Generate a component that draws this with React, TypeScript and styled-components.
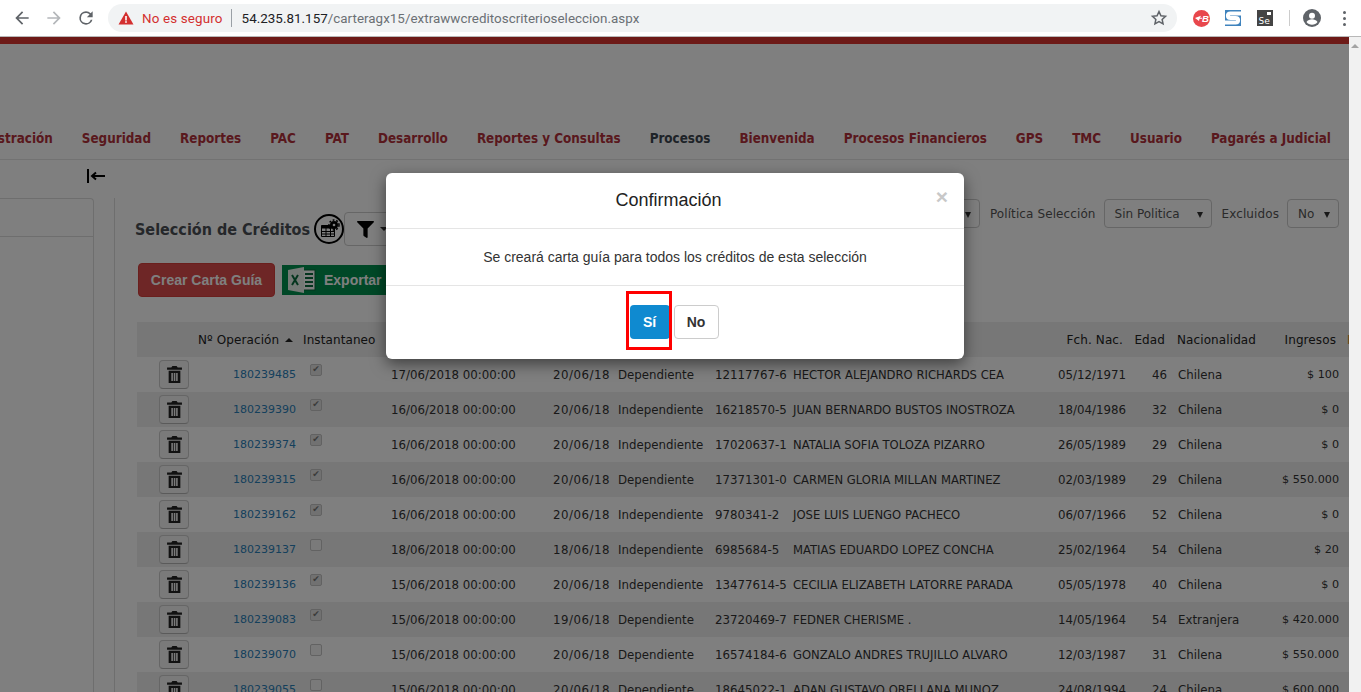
import { createGlobalStyle } from "styled-components";
import styled from "styled-components";
import { FaFilter } from "react-icons/fa";

interface CreditRow {
  id: string;
  instant: boolean;
  created: string;
  date: string;
  kind: string;
  rut: string;
  name: string;
  birth: string;
  age: string;
  nationality: string;
  income: string;
}

const row = (
  id: string,
  instant: boolean,
  created: string,
  date: string,
  kind: string,
  rut: string,
  name: string,
  birth: string,
  age: string,
  nationality: string,
  income: string
): CreditRow => ({ id, instant, created, date, kind, rut, name, birth, age, nationality, income });

const ROWS: CreditRow[] = [
  row("180239485", true, "17/06/2018 00:00:00", "20/06/18", "Dependiente", "12117767-6", "HECTOR ALEJANDRO RICHARDS CEA", "05/12/1971", "46", "Chilena", "$ 100"),
  row("180239390", true, "16/06/2018 00:00:00", "20/06/18", "Independiente", "16218570-5", "JUAN BERNARDO BUSTOS INOSTROZA", "18/04/1986", "32", "Chilena", "$ 0"),
  row("180239374", true, "16/06/2018 00:00:00", "20/06/18", "Independiente", "17020637-1", "NATALIA SOFIA TOLOZA PIZARRO", "26/05/1989", "29", "Chilena", "$ 0"),
  row("180239315", true, "16/06/2018 00:00:00", "20/06/18", "Dependiente", "17371301-0", "CARMEN GLORIA MILLAN MARTINEZ", "02/03/1989", "29", "Chilena", "$ 550.000"),
  row("180239162", true, "16/06/2018 00:00:00", "20/06/18", "Independiente", "9780341-2", "JOSE LUIS LUENGO PACHECO", "06/07/1966", "52", "Chilena", "$ 0"),
  row("180239137", false, "18/06/2018 00:00:00", "18/06/18", "Independiente", "6985684-5", "MATIAS EDUARDO LOPEZ CONCHA", "25/02/1964", "54", "Chilena", "$ 20"),
  row("180239136", true, "15/06/2018 00:00:00", "20/06/18", "Independiente", "13477614-5", "CECILIA ELIZABETH LATORRE PARADA", "05/05/1978", "40", "Chilena", "$ 0"),
  row("180239083", true, "15/06/2018 00:00:00", "19/06/18", "Dependiente", "23720469-7", "FEDNER CHERISME .", "14/05/1964", "54", "Extranjera", "$ 420.000"),
  row("180239070", false, "15/06/2018 00:00:00", "20/06/18", "Dependiente", "16574184-6", "GONZALO ANDRES TRUJILLO ALVARO", "12/03/1987", "31", "Chilena", "$ 550.000"),
  row("180239055", false, "15/06/2018 00:00:00", "20/06/18", "Dependiente", "18645022-1", "ADAN GUSTAVO ORELLANA MUNOZ", "24/08/1994", "24", "Chilena", "$ 600.000"),
];

const MENU = [
  "Administración",
  "Seguridad",
  "Reportes",
  "PAC",
  "PAT",
  "Desarrollo",
  "Reportes y Consultas",
  "Procesos",
  "Bienvenida",
  "Procesos Financieros",
  "GPS",
  "TMC",
  "Usuario",
  "Pagarés a Judicial",
];

export default function App() {
  return (
    <Screen>
      <GlobalStyle />
      <BrowserBar>
        <NavButtons>
          <svg viewBox="0 0 24 24" width="20" height="20">
            <path d="M20 11H7.8l5.6-5.6L12 4l-8 8 8 8 1.4-1.4L7.8 13H20z" fill="#5f6368" />
          </svg>
          <svg viewBox="0 0 24 24" width="20" height="20">
            <path d="M4 11h12.2l-5.6-5.6L12 4l8 8-8 8-1.4-1.4 5.6-5.6H4z" fill="#b4b7ba" />
          </svg>
          <svg viewBox="0 0 24 24" width="20" height="20">
            <path
              d="M17.65 6.35A7.96 7.96 0 0 0 12 4a8 8 0 1 0 7.73 10h-2.08A6 6 0 1 1 12 6c1.66 0 3.14.69 4.22 1.78L13 11h7V4z"
              fill="#5f6368"
            />
          </svg>
        </NavButtons>
        <Omnibox>
          <svg viewBox="0 0 16 16" width="16" height="16">
            <path d="M8 1.500 15.500 14.500H.5z" fill="#d32f2f" />
            <rect x="7.200" y="6" width="1.600" height="4.500" fill="#fff" />
            <rect x="7.200" y="11.200" width="1.600" height="1.600" fill="#fff" />
          </svg>
          <Insecure>No es seguro</Insecure>
          <OmniDivider />
          <Url>
            <b>54.235.81.157</b>/carteragx15/extrawwcreditoscriterioseleccion.aspx
          </Url>
          <StarIcon viewBox="0 0 24 24" width="18" height="18">
            <path
              d="M12 3.500l2.600 5.600 6.100.7-4.500 4.100 1.200 6-5.400-3-5.400 3 1.200-6-4.500-4.100 6.100-.7z"
              fill="none"
              stroke="#5f6368"
              strokeWidth="2"
            />
          </StarIcon>
        </Omnibox>
        <Extensions>
          <svg viewBox="0 0 17 17" width="17" height="17">
            <circle cx="8.500" cy="8.500" r="8.500" fill="#e8474c" />
            <path d="M2 8l6-2.200-1 2h2v1H6.500L6 11z" fill="#fff" />
            <text x="9" y="12" fontSize="9.500" fontWeight="700" fontStyle="italic" fill="#fff" fontFamily="Liberation Sans, sans-serif">
              B
            </text>
          </svg>
          <svg viewBox="0 0 16 16" width="16" height="16">
            <rect width="16" height="16" fill="#3f83bd" />
            <path d="M16 3.500H5.500C2 3.500 2 8 5.500 8h5c3.500 0 3.500 4.500 0 4.500H0" fill="none" stroke="#fff" strokeWidth="4" />
          </svg>
          <SeIcon viewBox="0 0 16 16" width="16" height="16">
            <rect width="16" height="16" fill="#444" />
            <rect x="10" y="2" width="4" height="3" fill="#fff" />
            <text x="1.500" y="14" fontSize="9.500" fill="#fff" fontFamily="DejaVu Sans Mono, monospace">
              Se
            </text>
          </SeIcon>
          <ExtDivider />
          <svg viewBox="0 0 18 18" width="18" height="18">
            <circle cx="9" cy="9" r="9" fill="#5f6368" />
            <circle cx="9" cy="6.800" r="3" fill="#fff" />
            <path d="M3.500 13c1-2 3.500-2.800 5.500-2.800s4.500.8 5.500 2.800c-1.200 1.700-3.300 2.800-5.500 2.800S4.700 14.700 3.500 13z" fill="#fff" />
          </svg>
          <Dots>
            <i />
            <i />
            <i />
          </Dots>
        </Extensions>
      </BrowserBar>

      <Viewport>
        <Page>
          <TopBand />
          <Brand />
          <Menu>
            {MENU.map((item) => (
              <MenuItem key={item} $active={item === "Procesos"}>
                {item}
              </MenuItem>
            ))}
          </Menu>
          <CollapseRow>
            <svg viewBox="0 0 18 14" width="18" height="14">
              <path d="M1 0v14" stroke="#000" strokeWidth="2" fill="none" />
              <path d="M18 7H5M9 3.500 5 7l4 3.500" stroke="#000" strokeWidth="2" fill="none" />
            </svg>
          </CollapseRow>
          <Workspace>
            <SidePanel>
              <SidePanelHead />
            </SidePanel>
            <Content>
              <TitleRow>
                <TitleGroup>
                  <Title>Selección de Créditos</Title>
                  <svg viewBox="0 0 30 30" width="30" height="30">
                    <circle cx="15" cy="15" r="14" fill="#fff" stroke="#000" strokeWidth="2" />
                    <path d="M7.500 11.500h13v11h-13z" fill="#fff" stroke="#000" strokeWidth="1" />
                    <path d="M7.500 11.500h13v3h-13z" fill="#000" />
                    <path d="M7.500 17.500h13M7.500 20h13M12 14v8M16.500 14v8" stroke="#000" strokeWidth="1" fill="none" />
                    <circle cx="20" cy="11" r="4" fill="#000" />
                    <circle cx="20" cy="11" r="5" fill="none" stroke="#000" strokeWidth="1.500" strokeDasharray="1.800 1.800" />
                    <circle cx="20" cy="11" r="1.300" fill="#fff" />
                  </svg>
                  <FilterButton>
                    <FaFilter size={17} color="#000" />
                    <Caret />
                  </FilterButton>
                </TitleGroup>
                <FilterGroup>
                  <SelectBox $width={40} />
                  <FilterLabel>Política Selección</FilterLabel>
                  <SelectBox $width={108}>Sin Politica</SelectBox>
                  <FilterLabel>Excluidos</FilterLabel>
                  <SelectBox $width={52}>No</SelectBox>
                </FilterGroup>
              </TitleRow>
              <Actions>
                <DangerButton>Crear Carta Guía</DangerButton>
                <ExportButton>
                  <svg viewBox="0 0 28 26" width="28" height="26">
                    <rect x="10" y="3" width="17" height="20" fill="#fff" stroke="#0a6b3d" />
                    <path d="M17 7h8M17 11h8M17 15h8M17 19h8" stroke="#0a6b3d" strokeWidth="2" />
                    <path d="M0 3l16-3v26L0 23z" fill="#eaf3ec" />
                    <path d="M4 8l6 10M10 8l-6 10" stroke="#0a6b3d" strokeWidth="2" />
                  </svg>
                  Exportar
                </ExportButton>
              </Actions>
              <Table>
                <HeadRow>
                  <span />
                  <HeadCell>
                    Nº Operación <SortArrow />
                  </HeadCell>
                  <HeadCell $pad="0 0 0 7px">Instantaneo</HeadCell>
                  <span />
                  <span />
                  <span />
                  <span />
                  <span />
                  <HeadCell $align="right" $pad="0 3px 0 0">
                    Fch. Nac.
                  </HeadCell>
                  <HeadCell $align="right" $pad="0 2px 0 0">
                    Edad
                  </HeadCell>
                  <HeadCell $pad="0 0 0 10px">Nacionalidad</HeadCell>
                  <HeadCell $align="right" $pad="0 3px 0 0">
                    Ingresos
                  </HeadCell>
                  <ClippedHead>Fecha</ClippedHead>
                </HeadRow>
                {ROWS.map((r, i) => (
                  <BodyRow key={r.id} $shaded={i % 2 === 1}>
                    <TrashButton>
                      <svg viewBox="0 0 14 16" width="15" height="17">
                        <path d="M5 0h4l1 1.500h4V3.500H0V1.500h4z" fill="#222" />
                        <path fillRule="evenodd" d="M1.500 4.500h11V16h-11zM4 6.500V14h1.500V6.500zM6.300 6.500V14h1.500V6.500zM8.500 6.500V14H10V6.500z" fill="#222" />
                      </svg>
                    </TrashButton>
                    <LinkCell>{r.id}</LinkCell>
                    <CheckCell>
                      <CheckBox $checked={r.instant}>{r.instant && "✔"}</CheckBox>
                    </CheckCell>
                    <Cell>{r.created}</Cell>
                    <ShortDateCell>{r.date}</ShortDateCell>
                    <Cell $pad="0 0 0 8px">{r.kind}</Cell>
                    <Cell>{r.rut}</Cell>
                    <NameCell>{r.name}</NameCell>
                    <Cell $align="right">{r.birth}</Cell>
                    <Cell $align="right">{r.age}</Cell>
                    <Cell $pad="0 0 0 11px">{r.nationality}</Cell>
                    <IncomeCell>{r.income}</IncomeCell>
                    <span />
                  </BodyRow>
                ))}
              </Table>
            </Content>
          </Workspace>
          <Backdrop />
          <Modal>
            <ModalHeader>
              Confirmación
              <CloseMark>×</CloseMark>
            </ModalHeader>
            <ModalBody>Se creará carta guía para todos los créditos de esta selección</ModalBody>
            <ModalFooter>
              <YesButton>Sí</YesButton>
              <NoButton>No</NoButton>
              <Highlight />
            </ModalFooter>
          </Modal>
        </Page>
        <Scrollbar>
          <ScrollArrow />
        </Scrollbar>
      </Viewport>
    </Screen>
  );
}

const GlobalStyle = createGlobalStyle`
  html, body { margin: 0; padding: 0; height: 100%; overflow: hidden; background: #fff; }
  * { box-sizing: border-box; }
`;
const Screen = styled.div`
  width: 1361px;
  height: 692px;
  display: flex;
  flex-direction: column;
  overflow: hidden;
  font-family: "DejaVu Sans", Tahoma, sans-serif;
`;
const BrowserBar = styled.header`
  height: 37px;
  flex: none;
  display: flex;
  align-items: center;
  background: #fff;
  border-bottom: 1px solid #b8b8b8;
`;
const NavButtons = styled.div`
  display: flex;
  gap: 12px;
  padding-left: 12px;
`;
const Omnibox = styled.div`
  margin-left: 12px;
  width: 1069px;
  height: 28px;
  border-radius: 14px;
  background: #f1f3f4;
  display: flex;
  align-items: center;
  padding: 0 9px 0 10px;
  font-family: Roboto, "Liberation Sans", sans-serif;
  font-size: 13.4px;
`;
const Insecure = styled.span`
  margin-left: 8px;
  color: #d32f2f;
  letter-spacing: 0.15px;
`;
const OmniDivider = styled.span`
  width: 1px;
  height: 18px;
  margin: 0 10px 0 8px;
  background: #9aa0a6;
`;
const Url = styled.span`
  color: #6b7075;
  letter-spacing: 0.02px;
  b {
    font-weight: 400;
    color: #202124;
  }
`;
const StarIcon = styled.svg`
  margin-left: auto;
`;
const Extensions = styled.div`
  flex: 1;
  display: flex;
  align-items: center;
  padding-left: 16px;
  gap: 15px;
`;
const SeIcon = styled.svg`
  margin-left: 1px;
`;
const ExtDivider = styled.span`
  width: 1px;
  height: 16px;
  margin: 0 -2px 0 1px;
  background: #ccc;
`;
const Dots = styled.span`
  display: flex;
  flex-direction: column;
  gap: 3px;
  margin-left: 7px;
  i {
    width: 3px;
    height: 3px;
    border-radius: 50%;
    background: #5f6368;
  }
`;
const Viewport = styled.div`
  flex: 1;
  display: flex;
  min-height: 0;
`;
const Page = styled.main`
  position: relative;
  width: 1349px;
  display: flex;
  flex-direction: column;
  overflow: hidden;
  background: #fff;
`;
const Scrollbar = styled.div`
  flex: 1;
  background: #f1f1f1;
  display: flex;
  justify-content: center;
  padding-top: 7px;
`;
const ScrollArrow = styled.span`
  border-left: 4px solid transparent;
  border-right: 4px solid transparent;
  border-bottom: 4px solid #a3a3a3;
  height: 0;
`;
const TopBand = styled.div`
  height: 7px;
  flex: none;
  background: #da342e;
`;
const Brand = styled.div`
  height: 76px;
  flex: none;
`;
const Menu = styled.nav`
  height: 40px;
  flex: none;
  display: flex;
  align-items: center;
  justify-content: flex-end;
  gap: 29px;
  padding: 0 18px 2px 0;
  white-space: nowrap;
  font-family: "DejaVu Sans Condensed", "DejaVu Sans", Tahoma, sans-serif;
  font-size: 13.35px;
  font-weight: 700;
  border-bottom: 1px solid #e4e4e4;
`;
const MenuItem = styled.a<{ $active: boolean }>`
  flex: none;
  color: ${(p) => (p.$active ? "#3c4650" : "#b3303a")};
`;
const CollapseRow = styled.div`
  height: 38px;
  flex: none;
  width: 105px;
  display: flex;
  justify-content: flex-end;
  align-items: flex-start;
  padding-top: 9px;
`;
const Workspace = styled.div`
  flex: 1;
  display: flex;
  min-height: 0;
`;
const SidePanel = styled.aside`
  width: 94px;
  flex: none;
  border: 1px solid #ddd;
  border-left: 0;
  border-bottom: 0;
  border-top-right-radius: 4px;
`;
const SidePanelHead = styled.div`
  height: 38px;
  border-bottom: 1px solid #ddd;
`;
const Content = styled.section`
  margin-left: 20px;
  flex: 1;
  min-width: 0;
  border-left: 1px solid #ddd;
`;
const TitleRow = styled.div`
  display: flex;
  justify-content: space-between;
  align-items: flex-start;
  padding-right: 10px;
`;
const TitleGroup = styled.div`
  display: flex;
  align-items: center;
  gap: 4px;
  padding: 14px 0 0 20px;
`;
const Title = styled.h2`
  margin: 0;
  font-family: "DejaVu Sans Condensed", "DejaVu Sans", Tahoma, sans-serif;
  font-size: 16px;
  font-weight: 700;
  color: #4a4f55;
  white-space: nowrap;
`;
const FilterButton = styled.div`
  width: 60px;
  height: 34px;
  margin-left: -4px;
  display: flex;
  align-items: center;
  gap: 6px;
  padding-left: 12px;
  background: #fff;
  border: 1px solid #ccc;
  border-radius: 4px;
`;
const Caret = styled.span`
  border-left: 4px solid transparent;
  border-right: 4px solid transparent;
  border-top: 4px solid #333;
`;
const FilterGroup = styled.div`
  display: flex;
  align-items: center;
  padding-top: 1px;
  font-size: 12px;
  color: #555;
`;
const FilterLabel = styled.span`
  white-space: nowrap;
  letter-spacing: 0.1px;
  margin: 0 8px 0 10px;
`;
const SelectBox = styled.div<{ $width: number }>`
  position: relative;
  width: ${(p) => p.$width}px;
  height: 29px;
  display: flex;
  align-items: center;
  padding-left: 10px;
  border: 1px solid #ccc;
  border-radius: 4px;
  background: #fff;
  &::after {
    content: "";
    position: absolute;
    right: 8px;
    top: 12px;
    border-left: 3.5px solid transparent;
    border-right: 3.5px solid transparent;
    border-top: 6px solid #333;
  }
`;
const Actions = styled.div`
  display: flex;
  align-items: center;
  gap: 7px;
  padding: 17px 0 0 23px;
`;
const DangerButton = styled.div`
  width: 137px;
  height: 34px;
  display: flex;
  align-items: center;
  justify-content: center;
  background: #dc4c4c;
  border: 1px solid #d43f3a;
  border-radius: 4px;
  color: #fff;
  font-family: "Liberation Sans", Arial, sans-serif;
  font-size: 14px;
  font-weight: 700;
`;
const ExportButton = styled.div`
  width: 150px;
  height: 30px;
  display: flex;
  align-items: center;
  gap: 8px;
  padding-left: 6px;
  background: #00914f;
  color: #fff;
  font-family: "Liberation Sans", Arial, sans-serif;
  font-size: 14px;
  font-weight: 700;
`;
const Table = styled.div`
  margin: 25px 0 0 22px;
  font-size: 11.8px;
  color: #333;
`;
const COLUMNS = "61px 98px 95px 149px 70px 105px 78px 257px 76px 41px 103px 69px 10px";
const HeadRow = styled.div`
  height: 35px;
  display: grid;
  grid-template-columns: ${COLUMNS};
  align-items: center;
  background: #eee;
  white-space: nowrap;
  color: #222;
  font-size: 12px;
  letter-spacing: 0.1px;
`;
const HeadCell = styled.span<{ $align?: string; $pad?: string }>`
  text-align: ${(p) => p.$align ?? "left"};
  padding: ${(p) => p.$pad ?? "0"};
`;
const ClippedHead = styled.span`
  padding-left: 8px;
  color: #c9822a;
  overflow: hidden;
`;
const SortArrow = styled.i`
  display: inline-block;
  margin-left: 2px;
  vertical-align: 2px;
  border-left: 4px solid transparent;
  border-right: 4px solid transparent;
  border-bottom: 4px solid #222;
`;
const BodyRow = styled.div<{ $shaded: boolean }>`
  height: 35px;
  display: grid;
  grid-template-columns: ${COLUMNS};
  align-items: center;
  white-space: nowrap;
  background: ${(p) => (p.$shaded ? "#eee" : "transparent")};
`;
const TrashButton = styled.div`
  width: 30px;
  height: 29px;
  margin-left: 22px;
  display: flex;
  align-items: center;
  justify-content: center;
  background: #f5f5f5;
  border: 1px solid #ccc;
  border-bottom-color: #b4b4b4;
  border-radius: 4px;
`;
const Cell = styled.span<{ $align?: string; $pad?: string }>`
  text-align: ${(p) => p.$align ?? "left"};
  padding: ${(p) => p.$pad ?? "0"};
`;
const ShortDateCell = styled.span`
  text-align: right;
  letter-spacing: 0.5px;
`;
const IncomeCell = styled.span`
  text-align: right;
  font-size: 11.2px;
`;
const NameCell = styled.span`
  font-size: 11.6px;
`;
const LinkCell = styled.a`
  text-align: right;
  font-size: 11px;
  color: #2a80b9;
`;
const CheckCell = styled.span`
  display: flex;
  padding: 0 0 10px 14px;
`;
const CheckBox = styled.span<{ $checked: boolean }>`
  width: 12px;
  height: 12px;
  display: flex;
  align-items: center;
  justify-content: center;
  border: 1px solid #c4c4c4;
  border-radius: 2px;
  background: ${(p) => (p.$checked ? "#e3e3e3" : "#f4f4f4")};
  color: #777;
  font-size: 9px;
  line-height: 1;
`;
const Backdrop = styled.div`
  position: absolute;
  inset: 0;
  background: rgba(0, 0, 0, 0.5);
`;
const Modal = styled.div`
  position: absolute;
  left: 386px;
  top: 136px;
  width: 578px;
  height: 186px;
  display: flex;
  flex-direction: column;
  background: #fff;
  border-radius: 6px;
  box-shadow: 0 5px 15px rgba(0, 0, 0, 0.5);
  font-family: "Liberation Sans", Arial, sans-serif;
  color: #333;
`;
const ModalHeader = styled.div`
  position: relative;
  height: 56px;
  display: flex;
  align-items: center;
  justify-content: center;
  padding-right: 13px;
  border-bottom: 1px solid #e5e5e5;
  font-size: 18px;
  color: #222;
`;
const CloseMark = styled.span`
  position: absolute;
  right: 16px;
  top: 12px;
  font-size: 21px;
  font-weight: 700;
  color: #c8c8c8;
`;
const ModalBody = styled.div`
  height: 57px;
  display: flex;
  align-items: center;
  justify-content: center;
  border-bottom: 1px solid #e5e5e5;
  font-size: 14px;
`;
const ModalFooter = styled.div`
  position: relative;
  flex: 1;
  display: flex;
  justify-content: center;
  gap: 4px;
  padding: 19px 2px 0 0;
`;
const YesButton = styled.div`
  width: 40px;
  height: 34px;
  display: flex;
  align-items: center;
  justify-content: center;
  background: #0f8ad0;
  border-radius: 4px;
  color: #fff;
  font-size: 14px;
  font-weight: 700;
`;
const NoButton = styled.div`
  width: 45px;
  height: 34px;
  display: flex;
  align-items: center;
  justify-content: center;
  background: #fff;
  border: 1px solid #ccc;
  border-radius: 4px;
  font-size: 14px;
  font-weight: 700;
`;
const Highlight = styled.span`
  position: absolute;
  left: 240px;
  top: 5px;
  width: 46px;
  height: 59px;
  border: 3px solid #f00;
`;
